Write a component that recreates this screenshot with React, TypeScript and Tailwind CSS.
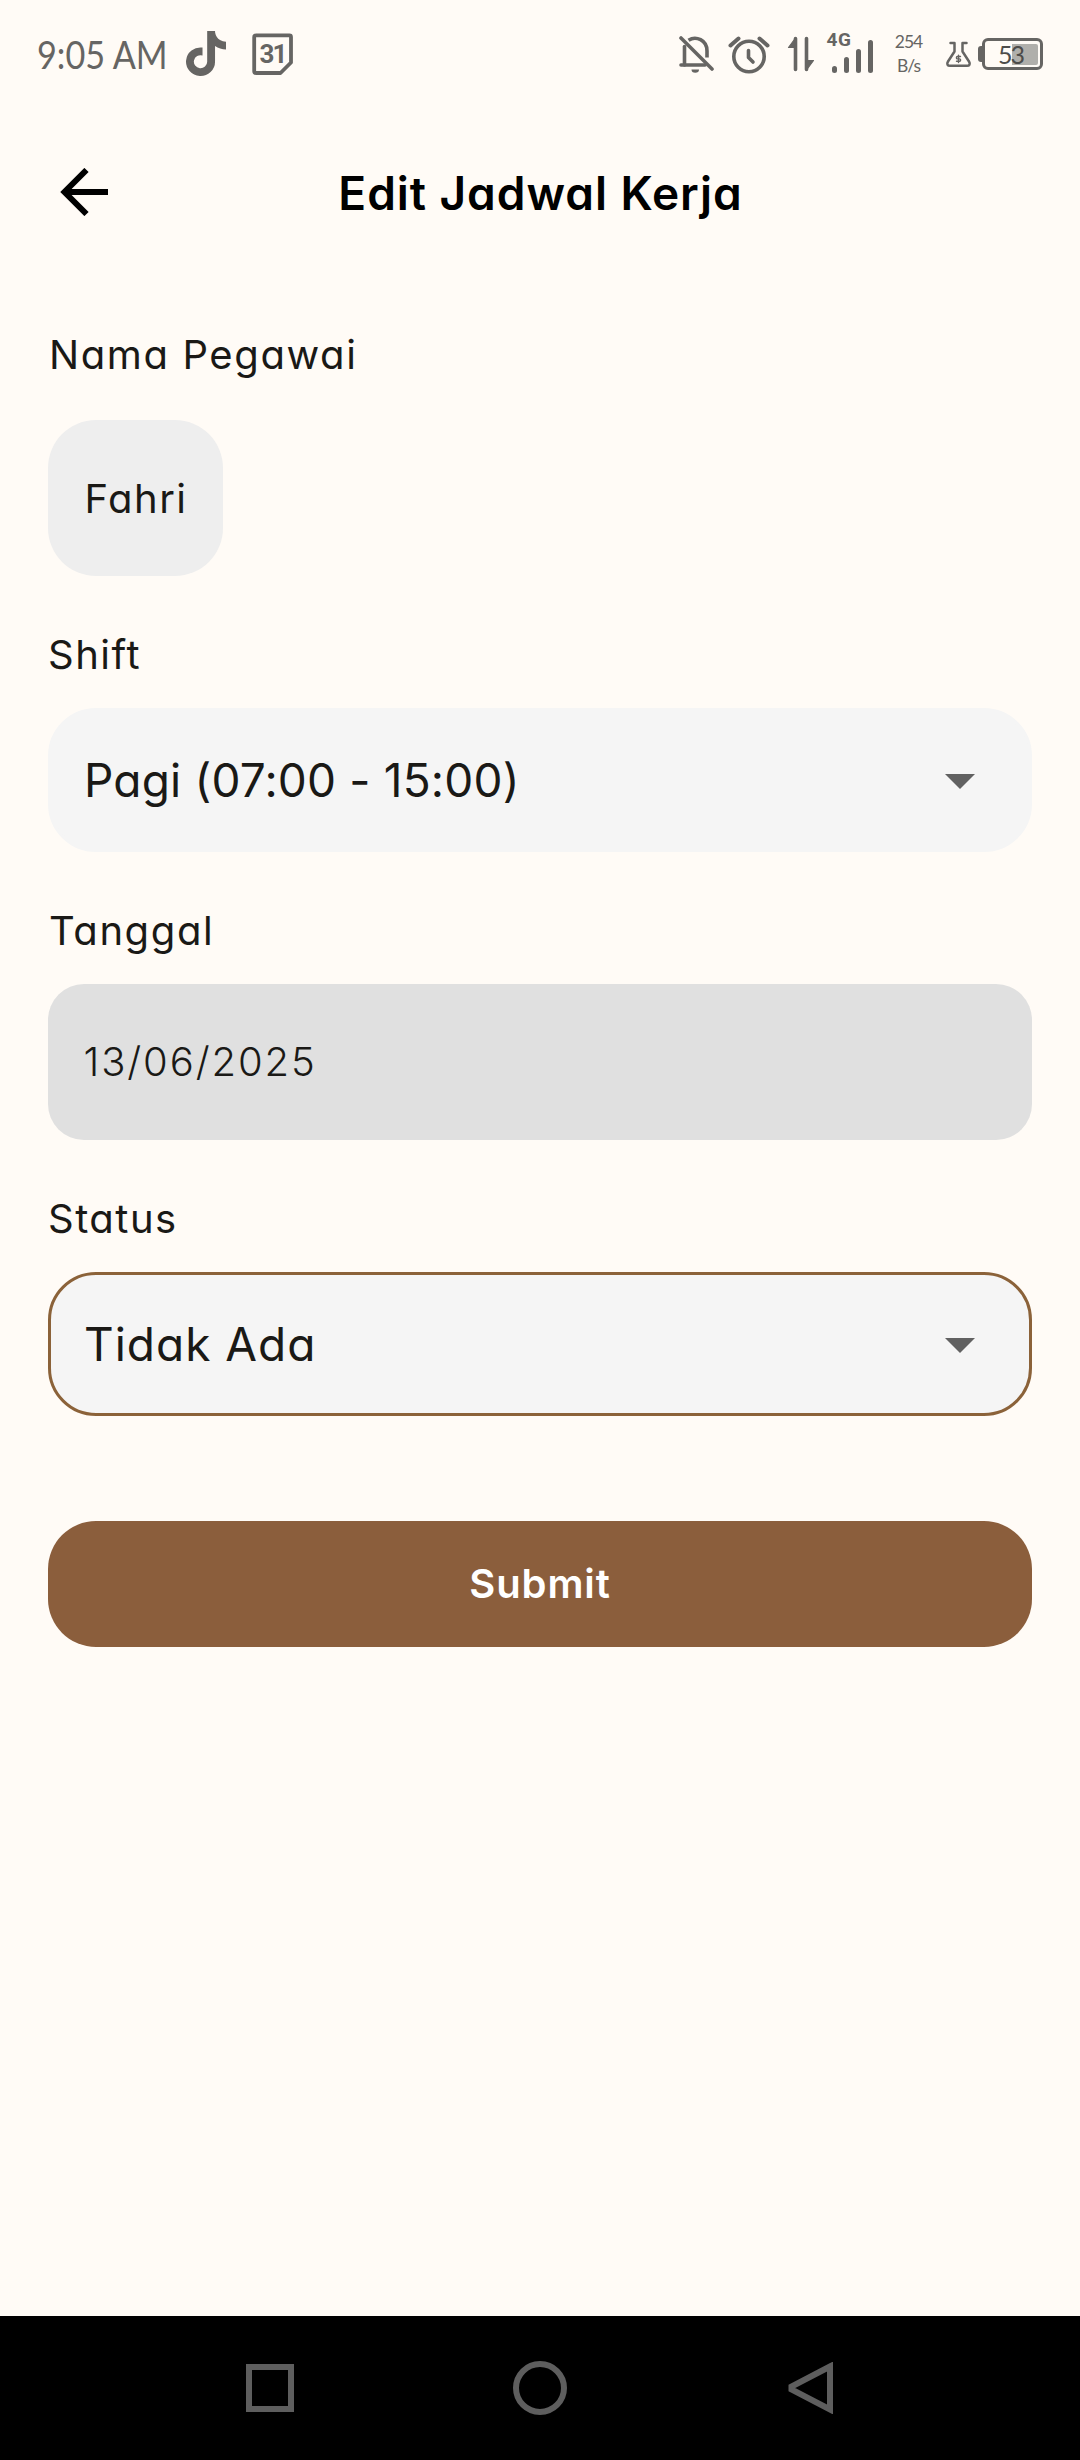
import { FaTiktok } from "react-icons/fa6";
import type { ReactNode } from "react";

function CalendarIcon() {
  return (
    <div className="relative ml-[25.5px] h-[42px] w-[41px]">
      <svg viewBox="0 0 41 42" className="h-full w-full" fill="none" stroke="currentColor" strokeWidth="3.8" strokeLinejoin="round">
        <path d="M4 2.4H37.5a1.5 1.5 0 0 1 1.5 1.5V29.5L28.5 40H4a1.8 1.8 0 0 1-1.8-1.8V4.2A1.8 1.8 0 0 1 4 2.4Z" />
      </svg>
      <span className="absolute left-[8px] top-[8.5px] font-['Roboto'] text-[26px] font-bold leading-[25px] tracking-[-1.8px]">31</span>
    </div>
  );
}

function BellOffIcon() {
  return (
    <svg viewBox="0 0 36 40" className="h-[40px] w-[36px]" fill="none" stroke="currentColor" strokeWidth="3.6" strokeLinecap="round">
      <path d="M6.5 12.5V31" />
      <path d="M3 31H27" />
      <path d="M10.5 6.2C18 1.5 29 6 29 17V23.5" strokeLinecap="butt" />
      <path d="M3 4L34 35" />
      <path d="M13.5 35.5h7.5a3.75 3.2 0 0 1-7.5 0Z" fill="currentColor" stroke="none" />
    </svg>
  );
}

function AlarmIcon() {
  return (
    <svg viewBox="0 0 42 40" className="ml-[14px] h-[40px] w-[42px]" fill="none" stroke="currentColor" strokeWidth="3.6" strokeLinecap="round" strokeLinejoin="round">
      <circle cx="21" cy="22.5" r="15.2" />
      <path d="M20.5 16.5V23.5L25 28" />
      <path d="M2.5 11.5L10.5 4.5M31.5 4.5L39.5 11.5" strokeWidth="4" />
    </svg>
  );
}

function DataArrowsIcon() {
  return (
    <svg viewBox="0 0 28 38" className="ml-[17px] h-[38px] w-[28px]" fill="currentColor" stroke="currentColor" strokeLinecap="round" strokeLinejoin="round">
      <path d="M8.5 3.5V34.5M19.5 3.5V34.5" strokeWidth="3.6" />
      <path d="M8.5 3L1.5 12.5H8.5ZM19.5 35L26.5 25.5H19.5Z" strokeWidth="1.2" />
    </svg>
  );
}

function Signal() {
  return (
    <div className="relative -mt-[3px] ml-[11.5px] h-[40px] w-[48px]">
      <span className="absolute left-0 top-[-3px] font-['Roboto'] text-[19px] font-bold leading-[19px] tracking-[0.5px]">4G</span>
      <div className="flex h-full items-end gap-[6.5px] pl-[5px]">
        <i className="h-[7px] w-[5.5px] rounded-full bg-current" />
        <i className="h-[16px] w-[5.5px] rounded-full bg-current" />
        <i className="h-[24px] w-[5.5px] rounded-full bg-current" />
        <i className="h-[33px] w-[5.5px] rounded-full bg-current" />
      </div>
    </div>
  );
}

function FlaskIcon() {
  return (
    <svg viewBox="0 0 27 28" className="ml-[19px] h-[28px] w-[27px]" fill="none" stroke="currentColor" strokeWidth="2.5" strokeLinecap="round" strokeLinejoin="round">
      <path d="M5.5 3H9.5V11.5L3 21.5C1.5 24 2.5 25.8 5 25.8H22C24.5 25.8 25.5 24 24 21.5L17.5 11.5V3H21.5" />
      <path d="M15.5 16.5H12.5C11 16.5 11 18.900 12.5 18.900H14.5C16 18.900 16 21.300 14.5 21.300H11.5M13.5 15.2V22.5" strokeWidth="1.4" />
    </svg>
  );
}

function Battery() {
  return (
    <div className="ml-[6px] flex items-center">
      <div className="h-[16px] w-[4.5px] rounded-l-[3px] bg-[#666563]" />
      <div className="relative flex h-[32px] w-[61px] items-center justify-end rounded-[6px] border-[3.5px] border-[#666563] pr-[2px]">
        <div className="h-[21px] w-[26px] rounded-r-[2px] bg-[#b0afab]" />
        <span className="absolute left-[13px] top-0 font-['Lato'] text-[25px] leading-[26px] tracking-[-2px] text-[#4d4c4a]">53</span>
      </div>
    </div>
  );
}

function StatusBar() {
  return (
    <header className="flex h-[108px] items-center justify-between pl-[37px] pr-[37px] text-[#666563]">
      <div className="flex items-center">
        <div className="w-[149px]">
          <span className="inline-block origin-left scale-x-[0.9] whitespace-nowrap font-['Lato'] text-[38px] leading-[46px]">9:05 AM</span>
        </div>
        <FaTiktok className="-mt-[2px] h-[45px] w-[40px]" preserveAspectRatio="none" />
        <CalendarIcon />
      </div>
      <div className="flex items-center">
        <BellOffIcon />
        <AlarmIcon />
        <DataArrowsIcon />
        <Signal />
        <div className="ml-[17px] flex w-[34px] flex-col items-center font-['Lato'] text-[17.5px] leading-[24px] tracking-[-1px]">
          <span>254</span>
          <span>B/s</span>
        </div>
        <FlaskIcon />
        <Battery />
      </div>
    </header>
  );
}

function Label({ children, className }: { children: ReactNode; className: string }) {
  return <label className={`block h-[60px] pt-px text-[40px] leading-[60px] ${className}`}>{children}</label>;
}

function Select({ value, className }: { value: string; className: string }) {
  return (
    <button className={`mt-6 flex h-[144px] w-full items-center justify-between rounded-[48px] border-[3px] bg-[#f5f5f5] pl-[33px] pr-[54px] text-[46px] leading-[60px] ${className}`}>
      {value}
      <svg viewBox="0 0 30 15" className="mt-[2px] h-[15px] w-[30px]" fill="#616161">
        <path d="M0 0H30L15 15Z" />
      </svg>
    </button>
  );
}

export default function App() {
  return (
    <div className="flex h-[2460px] w-[1080px] flex-col bg-[#fffbf6] font-['Inter',sans-serif] text-[#1a1916] [font-feature-settings:'cv11']">
      <StatusBar />
      <div className="grid h-[168px] grid-cols-[168px_1fr_168px] items-center text-black">
        <svg viewBox="0 0 48 48" className="ml-[60px] h-[48px] w-[48px]" fill="none" stroke="currentColor" strokeWidth="6">
          <path d="M48 24H6M26.5 2L4.5 24L26.5 46" />
        </svg>
        <h1 className="pl-px pt-[2px] text-center text-[46px] font-semibold leading-[60px] tracking-[0.95px]">Edit Jadwal Kerja</h1>
      </div>
      <main className="flex-1 px-12 pt-12">
        <Label className="pl-px tracking-[1.6px]">Nama Pegawai</Label>
        <div className="mt-9 flex h-[156px] w-[174.5px] items-center rounded-[48px] bg-[#eeeeee] pl-[36.5px] pt-px text-[40px] tracking-[1.5px]">Fahri</div>
        <Label className="mt-12 tracking-[1.5px]">Shift</Label>
        <Select value="Pagi (07:00 - 15:00)" className="border-[#f5f5f5] tracking-[0.18px]" />
        <Label className="mt-12 pl-px tracking-[1.6px]">Tanggal</Label>
        <div className="mt-6 flex h-[156px] items-center rounded-[36px] bg-[#e0e0e0] pl-[35.5px] text-[40px] font-light tracking-[1.9px]">13/06/2025</div>
        <Label className="mt-12 tracking-[1.5px]">Status</Label>
        <Select value="Tidak Ada" className="border-[#8b6239] tracking-[1px]" />
        <button className="mt-[105px] h-[126px] w-full rounded-[48px] bg-[#8b5e3c] text-[40px] font-semibold leading-[60px] tracking-[0.9px] text-white">Submit</button>
      </main>
      <nav className="flex h-[144px] items-center justify-between bg-black pl-[246px] pr-[246px] text-[#5e5e5e]">
        <div className="h-[48px] w-[48px] border-[6px] border-current" />
        <div className="-ml-[3px] h-[54px] w-[54px] rounded-full border-[6px] border-current" />
        <svg viewBox="0 0 46 52" className="h-[52px] w-[46px]" fill="none" stroke="currentColor" strokeWidth="6">
          <path d="M42 4.5L3.5 24.5V27.5L42 47.5Z" />
        </svg>
      </nav>
    </div>
  );
}
